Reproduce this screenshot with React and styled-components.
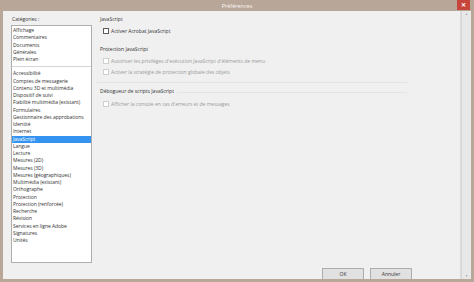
import React from "react";
import styled, { createGlobalStyle } from "styled-components";

const GlobalStyle = createGlobalStyle`
  html, body {
    margin: 0;
    padding: 0;
    background: #b8a699;
  }
  body {
    font-family: "Open Sans", "Noto Sans", sans-serif;
  }
`;

const categoriesTop = ["Affichage", "Commentaires", "Documents", "Générales", "Plein écran"];
const categories = [
  "Accessibilité",
  "Comptes de messagerie",
  "Contenu 3D et multimédia",
  "Dispositif de suivi",
  "Fiabilité multimédia (existant)",
  "Formulaires",
  "Gestionnaire des approbations",
  "Identité",
  "Internet",
  "JavaScript",
  "Langue",
  "Lecture",
  "Mesures (2D)",
  "Mesures (3D)",
  "Mesures (géographiques)",
  "Multimédia (existant)",
  "Orthographe",
  "Protection",
  "Protection (renforcée)",
  "Recherche",
  "Révision",
  "Services en ligne Adobe",
  "Signatures",
  "Unités",
];

const Window = styled.div`
  width: 474px;
  height: 282px;
  display: flex;
  flex-direction: column;
  background: #b8a699;
  overflow: hidden;
`;

const TitleBar = styled.div`
  height: 11px;
  flex: none;
  display: flex;
  align-items: center;
  justify-content: center;
  position: relative;
  color: #fbf7f3;
  font-size: 5.5px;
`;

const CloseButton = styled.div`
  position: absolute;
  right: 4px;
  top: 0;
  width: 13px;
  height: 10px;
  background: #c7463c;
  display: flex;
  align-items: center;
  justify-content: center;
  color: #fff;
  font-size: 6px;
  font-weight: 700;
`;

const Frame = styled.div`
  flex: 1;
  display: flex;
  margin: 0 3px 3px 3px;
  background: #f0f0f0;
  min-height: 0;
`;

const Content = styled.div`
  flex: 1;
  display: flex;
  flex-direction: column;
  padding: 4px 0 0 8px;
  border-right: 1px solid #dcdcdc;
`;

const Columns = styled.div`
  display: flex;
  gap: 5px;
  flex: 1;
  min-height: 0;
`;

const LeftColumn = styled.div`
  width: 81px;
  display: flex;
  flex-direction: column;
`;

const Label = styled.div`
  font-size: 5px;
  line-height: 8px;
  height: 10px;
  color: #333;
  padding-left: 1px;
`;

const ListBox = styled.div`
  flex: 1;
  background: #fff;
  border: 1px solid #aeaeae;
  padding-top: 1px;
  box-sizing: border-box;
`;

const Item = styled.div`
  font-size: 5px;
  line-height: 7.25px;
  height: 7.25px;
  padding-left: 1px;
  white-space: nowrap;
  letter-spacing: -0.05px;
  color: ${(p) => (p.$selected ? "#fff" : "#333")};
  background: ${(p) => (p.$selected ? "#3493f0" : "transparent")};
`;

const ListSeparator = styled.div`
  height: 1px;
  background: #d5d5d5;
  margin: 3px 0 3px 0;
`;

const RightColumn = styled.div`
  flex: 1;
  display: flex;
  flex-direction: column;
`;

const Group = styled.div`
  display: flex;
  flex-direction: column;
  border-top: ${(p) => (p.$line ? "1px solid #e3e3e3" : "none")};
  margin-right: 53px;
  padding-top: ${(p) => (p.$line ? "4px" : "0")};
  margin-top: ${(p) => p.$gap || 0}px;
`;

const Heading = styled.div`
  display: flex;
  align-items: center;
  gap: 3px;
  font-size: 5px;
  line-height: 8px;
  height: 8px;
  margin-bottom: ${(p) => p.$after || 2}px;
  padding-left: 3px;
  color: #333;
  &::after {
    content: "";
    flex: 1;
    height: 1px;
    background: ${(p) => (p.$rule ? "#e3e3e3" : "transparent")};
    margin-top: 2px;
  }
`;

const CheckRow = styled.label`
  display: flex;
  align-items: center;
  gap: 2px;
  height: 11px;
  padding-left: 6px;
  font-size: 5px;
  color: ${(p) => (p.$disabled ? "#9a9a9a" : "#333")};
`;

const Box = styled.span`
  width: 4px;
  height: 4px;
  flex: none;
  background: #fff;
  border: 1px solid ${(p) => (p.$disabled ? "#cfcfcf" : "#5c5c5c")};
`;

const ButtonRow = styled.div`
  height: 12px;
  display: flex;
  justify-content: flex-end;
  align-items: flex-end;
  gap: 6px;
  padding: 4px 48px 0 0;
  flex: none;
`;

const Button = styled.div`
  width: 42px;
  height: 11px;
  box-sizing: border-box;
  background: #e1e1e1;
  border: 1px solid #adadad;
  border-bottom: none;
  display: flex;
  align-items: center;
  justify-content: center;
  font-size: 5px;
  color: #333;
`;

const ScrollBar = styled.div`
  width: 9px;
  flex: none;
  display: flex;
  flex-direction: column;
  justify-content: space-between;
  align-items: center;
  background: #e8e8e8;
  border-left: 1px solid #d8d8d8;
`;

const Arrow = styled.span`
  font-size: 3px;
  color: #9a9a9a;
  line-height: 6px;
`;

const checks = [
  { heading: "JavaScript", after: 2, items: [{ label: "Activer Acrobat JavaScript" }] },
  {
    heading: "Protection JavaScript",
    gap: 9,
    after: 2,
    items: [
      { label: "Autoriser les privilèges d'exécution JavaScript d'éléments de menu", disabled: true },
      { label: "Activer la stratégie de protection globale des objets", disabled: true },
    ],
  },
  {
    heading: "Débogueur de scripts JavaScript",
    line: true,
    gap: 5,
    after: 3,
    items: [{ label: "Afficher la console en cas d'erreurs et de messages", disabled: true }],
  },
];

export default function App() {
  return (
    <Window>
      <GlobalStyle />
      <TitleBar>
        Préférences
        <CloseButton>✕</CloseButton>
      </TitleBar>
      <Frame>
        <Content>
          <Columns>
            <LeftColumn>
              <Label>Catégories :</Label>
              <ListBox>
                {categoriesTop.map((c) => (
                  <Item key={c}>{c}</Item>
                ))}
                <ListSeparator />
                {categories.map((c) => (
                  <Item key={c} $selected={c === "JavaScript"}>
                    {c}
                  </Item>
                ))}
              </ListBox>
            </LeftColumn>
            <RightColumn>
              {checks.map((g) => (
                <Group key={g.heading} $line={g.line} $gap={g.gap}>
                  <Heading $rule={g.line} $after={g.after}>
                    {g.heading}
                  </Heading>
                  {g.items.map((it) => (
                    <CheckRow key={it.label} $disabled={it.disabled}>
                      <Box $disabled={it.disabled} />
                      {it.label}
                    </CheckRow>
                  ))}
                </Group>
              ))}
            </RightColumn>
          </Columns>
          <ButtonRow>
            <Button>OK</Button>
            <Button>Annuler</Button>
          </ButtonRow>
        </Content>
        <ScrollBar>
          <Arrow>▲</Arrow>
          <Arrow>▼</Arrow>
        </ScrollBar>
      </Frame>
    </Window>
  );
}
